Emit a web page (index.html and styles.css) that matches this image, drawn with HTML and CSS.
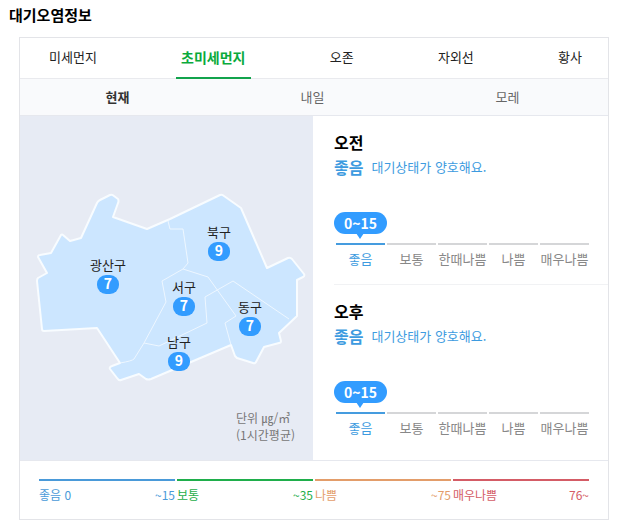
FILE: index.html
```html
<!DOCTYPE html>
<html lang="ko">

<head>
    <meta charset="UTF-8">
    <meta name="viewport" content="width=device-width, initial-scale=1.0">
    <title>대기오염정보</title>
    <link rel="stylesheet" href="styles.css">
</head>

<body>
    <h1 class="title">대기오염정보</h1>
    <div class="air_box">
        <div class="tabs">
            <button type="button">미세먼지</button>
            <button type="button" class="on">초미세먼지</button>
            <button type="button">오존</button>
            <button type="button">자외선</button>
            <button type="button">황사</button>
        </div>
        <div class="days">
            <button type="button" class="on">현재</button>
            <button type="button">내일</button>
            <button type="button">모레</button>
        </div>
        <div class="content">
            <div class="map">
                <svg viewBox="0 0 293 344">
                    <path class="land" d="M77 87Q78 85 80 84L90 79Q92 78 94 80L98 83Q99 85 98 87L93 101L127 113L150 103L200 79Q202 78 204 80L221 92L247 152L268 142Q270 141 272 143L284 158Q285 160 283 161L277 164V200L259 217L261 225Q261 227 259 227L244 231L236 246Q235 248 233 247L217 242Q216 241 215 240L211 229L131 263Q128 264 126 263L119 258L101 264Q99 265 97 262L90 253Q89 251 92 250L100 247L77 212L24 215Q22 215 22 213L17 165Q17 163 18 162L27 157L18 141Q18 139 20 139L31 137L41 119Q42 118 43 119L50 125L61 122Z" />
                    <path class="line" d="M148 105L150 113H163L168 147L163 153L142 165L146 186L124 227L114 243Q112 245 100 247" />
                    <path class="line" d="M124 227L139 230L187 207L185 181L213 165L269 203" />
                    <path class="line" d="M163 153L188 161L216 200L205 207L211 229" />
                    <g>
                        <text class="name" x="88" y="154">광산구</text>
                        <rect x="77" y="159" width="22" height="19" rx="9" />
                        <text class="num" x="88" y="173">7</text>
                    </g>
                    <g>
                        <text class="name" x="199" y="121">북구</text>
                        <rect x="188" y="126" width="22" height="19" rx="9" />
                        <text class="num" x="199" y="140">9</text>
                    </g>
                    <g>
                        <text class="name" x="164" y="176">서구</text>
                        <rect x="153" y="181" width="22" height="19" rx="9" />
                        <text class="num" x="164" y="195">7</text>
                    </g>
                    <g>
                        <text class="name" x="230" y="196">동구</text>
                        <rect x="219" y="201" width="22" height="19" rx="9" />
                        <text class="num" x="230" y="215">7</text>
                    </g>
                    <g>
                        <text class="name" x="159" y="231">남구</text>
                        <rect x="148" y="236" width="22" height="19" rx="9" />
                        <text class="num" x="159" y="250">9</text>
                    </g>
                </svg>
                <p class="unit">단위 ㎍/㎥<br>(1시간평균)</p>
            </div>
            <div class="forecast">
                <div class="time">
                    <h2>오전</h2>
                    <p class="state"><strong>좋음</strong>대기상태가 양호해요.</p>
                    <span class="bubble">0~15</span>
                    <ul class="steps">
                        <li class="on">좋음</li>
                        <li>보통</li>
                        <li>한때나쁨</li>
                        <li>나쁨</li>
                        <li>매우나쁨</li>
                    </ul>
                </div>
                <div class="time">
                    <h2>오후</h2>
                    <p class="state"><strong>좋음</strong>대기상태가 양호해요.</p>
                    <span class="bubble">0~15</span>
                    <ul class="steps">
                        <li class="on">좋음</li>
                        <li>보통</li>
                        <li>한때나쁨</li>
                        <li>나쁨</li>
                        <li>매우나쁨</li>
                    </ul>
                </div>
            </div>
        </div>
        <ul class="legend">
            <li class="good"><span>좋음 0</span><span>~15</span></li>
            <li class="normal"><span>보통</span><span>~35</span></li>
            <li class="bad"><span>나쁨</span><span>~75</span></li>
            <li class="worst"><span>매우나쁨</span><span>76~</span></li>
        </ul>
    </div>
</body>

</html>
```

FILE: styles.css
```css
* {
    margin: 0;
    padding: 0;
    box-sizing: border-box;
}

body {
    font-family: "Noto Sans CJK KR", sans-serif;
    font-size: 13px;
    line-height: 20px;
    color: #222;
    background: #fff;
}

ul {
    list-style: none;
}

button {
    border: 0;
    background: none;
    font: inherit;
    color: inherit;
    cursor: pointer;
}

.title {
    padding: 5px 9px 12px;
    font-size: 15px;
    line-height: 20px;
    color: #000;
}

.air_box {
    margin: 0 16px 0 19px;
    border: 1px solid #e3e4e8;
}

.tabs {
    display: flex;
    justify-content: space-between;
    height: 41px;
    padding: 0 21px 0 24px;
    border-bottom: 1px solid #e9eaee;
}

.tabs button {
    height: 41px;
    padding: 0 5px 2px;
    border-bottom: 2px solid transparent;
}

.tabs .on {
    border-color: #12a34c;
    font-size: 14px;
    font-weight: bold;
    color: #0aaa3c;
}

.days {
    display: flex;
    height: 37px;
    padding-right: 3px;
    border-bottom: 1px solid #e6e8ee;
    background: #f9fafc;
    color: #666;
}

.days button {
    flex: 1;
}

.days .on {
    font-weight: bold;
    color: #333;
}

.content {
    display: grid;
    grid-template-columns: 293fr 295fr;
    border-bottom: 1px solid #e6e8ee;
}

.map {
    position: relative;
    background: #e7ebf4;
}

.map svg {
    display: block;
    width: 100%;
}

.land {
    fill: #cce6ff;
    stroke: #f8fcff;
    stroke-width: 2;
    stroke-linejoin: round;
}

.line {
    fill: none;
    stroke: #eef7ff;
    stroke-width: 1;
}

.map rect {
    fill: #329cff;
}

.map text {
    text-anchor: middle;
}

.name {
    font-size: 13px;
    fill: #222;
}

.num {
    font-size: 14px;
    font-weight: bold;
    fill: #fff;
}

.unit {
    position: absolute;
    right: 18px;
    bottom: 17px;
    font-size: 12px;
    line-height: 17px;
    color: #777;
}

.forecast {
    padding-left: 21px;
}

.time {
    padding: 14px 0 15px;
}

.time + .time {
    border-top: 1px solid #f1f2f4;
}

.time h2 {
    font-size: 16px;
    line-height: 24px;
    color: #000;
}

.state {
    display: flex;
    align-items: center;
    height: 26px;
    color: #3d9be0;
}

.state strong {
    margin-right: 8px;
    font-size: 16px;
}

.bubble {
    position: relative;
    display: block;
    width: 53px;
    height: 22px;
    margin: 32px 0 9px;
    border-radius: 11px;
    background: #329cff;
    font-size: 14px;
    font-weight: bold;
    line-height: 22px;
    text-align: center;
    color: #fff;
}

.bubble::after {
    content: "";
    position: absolute;
    top: 21px;
    left: 22px;
    border: 4px solid transparent;
    border-top: 6px solid #329cff;
    border-bottom: 0;
}

.steps {
    display: grid;
    grid-template-columns: repeat(5, 1fr);
    gap: 2px;
    margin: 0 19px 0 2px;
    text-align: center;
    white-space: nowrap;
    color: #888;
}

.steps li {
    padding-top: 4px;
    border-top: 2px solid #d5d6d8;
}

.steps .on {
    border-color: #459cdf;
    color: #3d9be0;
}

.legend {
    display: grid;
    grid-template-columns: repeat(4, 1fr);
    gap: 2px;
    padding: 18px 19px 14px;
    font-size: 12px;
}

.legend li {
    display: flex;
    justify-content: space-between;
    padding-top: 4px;
    border-top: 2px solid;
}

.good {
    color: #4a9ad9;
}

.normal {
    color: #1fae4b;
}

.bad {
    color: #e39d6a;
}

.worst {
    color: #d45c66;
}
```
